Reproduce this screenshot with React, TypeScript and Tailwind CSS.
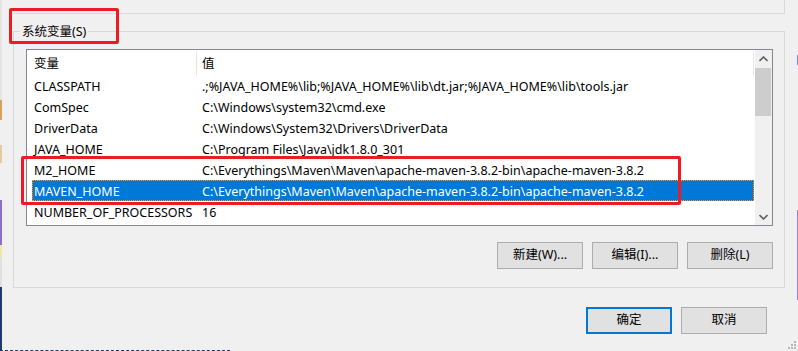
import React from 'react'

const font = { fontFamily: '"Noto Sans", "Noto Sans CJK SC", sans-serif' }

const rows = [
    { name: 'CLASSPATH', value: '.;%JAVA_HOME%\\lib;%JAVA_HOME%\\lib\\dt.jar;%JAVA_HOME%\\lib\\tools.jar' },
    { name: 'ComSpec', value: 'C:\\Windows\\system32\\cmd.exe' },
    { name: 'DriverData', value: 'C:\\Windows\\System32\\Drivers\\DriverData' },
    { name: 'JAVA_HOME', value: 'C:\\Program Files\\Java\\jdk1.8.0_301' },
    { name: 'M2_HOME', value: 'C:\\Everythings\\Maven\\Maven\\apache-maven-3.8.2-bin\\apache-maven-3.8.2' },
    { name: 'MAVEN_HOME', value: 'C:\\Everythings\\Maven\\Maven\\apache-maven-3.8.2-bin\\apache-maven-3.8.2', selected: true },
    { name: 'NUMBER_OF_PROCESSORS', value: '16' },
]

function WinButton({ label, primary }: { label: string; primary?: boolean }) {
    return (
        <button
            type="button"
            className={
                primary
                    ? 'w-[86px] h-[27px] bg-[#e1e1e1] border-2 border-[#0078d7] text-[12.5px] text-black flex items-center justify-center'
                    : 'w-[86px] h-[27px] bg-[#e1e1e1] border border-[#adadad] text-[12.5px] text-black flex items-center justify-center'
            }
        >
            {label}
        </button>
    )
}

function Chevron({ up }: { up?: boolean }) {
    return (
        <svg width="9" height="6" viewBox="0 0 9 6">
            <path
                d={up ? 'M0.5 5 L4.5 1 L8.5 5' : 'M0.5 1 L4.5 5 L8.5 1'}
                fill="none"
                stroke="#606060"
                strokeWidth="1.6"
            />
        </svg>
    )
}

export default function App() {
    return (
        <div className="w-[798px] h-[351px] bg-[#f0f0f0] flex flex-col overflow-hidden text-black" style={font}>
            <div className="flex h-[350px]">
                {/* 左侧其他窗口的边缘 */}
                <div className="w-[2px] flex flex-col">
                    <div className="h-[100px] bg-[#e4e4e4]" />
                    <div className="h-[20px] bg-[#d9a05b]" />
                    <div className="h-[25px] bg-[#f0f0f0]" />
                    <div className="h-[18px] bg-[#e8c9a0]" />
                    <div className="h-[37px] bg-[#f0f0f0]" />
                    <div className="h-[45px] bg-[#8a6fc9]" />
                    <div className="h-[12px] bg-[#f2e6a8]" />
                    <div className="h-[30px] bg-[#e0e0e0]" />
                    <div className="flex-1 bg-[#1c3a6b]" />
                </div>

                <div className="w-[795px] flex flex-col relative">
                    {/* 上一个分组框 */}
                    <div className="ml-[11px] w-[772px] h-[14px] border-b border-r border-[#d9d9d9]" />

                    {/* 系统变量 */}
                    <div className="mt-[17px] ml-[11px] w-[772px] h-[257px] border border-[#d9d9d9] relative flex flex-col">
                        <div className="absolute left-[6px] -top-[9px] px-[2px] bg-[#f0f0f0] text-[12.5px] leading-[18px]">
                            系统变量(S)
                        </div>

                        <div className="mt-[17px] ml-[12px] w-[747px] h-[177px] border border-[#828790] bg-white flex">
                            <div className="w-[728px] flex flex-col">
                                <div className="h-[25px] flex text-[12.5px]">
                                    <div className="w-[169px] pl-[7px] pt-[3px] flex items-center">变量</div>
                                    <div className="w-px mt-px h-[24px] bg-[#e5e5e5]" />
                                    <div className="flex-1 pl-[5px] pt-[3px] flex items-center">值</div>
                                    <div className="w-px mt-px h-[24px] bg-[#e5e5e5]" />
                                    <div className="w-px" />
                                </div>
                                {rows.map(row => (
                                    <div
                                        key={row.name}
                                        className={
                                            row.selected
                                                ? 'ml-[5px] mr-px h-[21px] flex items-center text-[12.5px] pt-[3px] bg-[#0078d7] text-white border border-dotted border-[#e8994a]'
                                                : 'ml-[5px] mr-px h-[21px] flex items-center text-[12.5px] pt-[3px] border border-transparent'
                                        }
                                    >
                                        <div className="w-[163px] pl-[1px] whitespace-nowrap">{row.name}</div>
                                        <div className="flex-1 pl-[6px] whitespace-nowrap">{row.value}</div>
                                    </div>
                                ))}
                            </div>
                            <div className="w-[17px] flex flex-col bg-[#f0f0f0]">
                                <div className="h-[17px] flex items-center justify-center">
                                    <Chevron up />
                                </div>
                                <div className="mt-px ml-0 w-[16px] h-[48px] bg-[#cdcdcd]" />
                                <div className="flex-1" />
                                <div className="h-[17px] flex items-center justify-center">
                                    <Chevron />
                                </div>
                            </div>
                        </div>

                        <div className="mt-[16px] mr-[11px] flex justify-end gap-[9px]">
                            <WinButton label="新建(W)..." />
                            <WinButton label="编辑(I)..." />
                            <WinButton label="删除(L)" />
                        </div>
                    </div>

                    <div className="mt-[19px] mr-[30px] flex justify-end gap-[9px]">
                        <WinButton label="确定" primary />
                        <WinButton label="取消" />
                    </div>

                    {/* 红框标注 */}
                    <div className="absolute left-[7px] top-[8px] w-[110px] h-[36px] border-[3px] border-[#ed1c24] rounded-[2px]" />
                    <div className="absolute left-[19px] top-[156px] w-[660px] h-[49px] border-[3px] border-[#ed1c24] rounded-[2px]" />

                    {/* 窗口缩放角 */}
                    <svg className="absolute right-0 bottom-0" width="10" height="10" viewBox="0 0 10 10">
                        <rect x="7" y="1" width="2" height="2" fill="#b8b8b8" />
                        <rect x="4" y="4" width="2" height="2" fill="#b8b8b8" />
                        <rect x="7" y="4" width="2" height="2" fill="#b8b8b8" />
                        <rect x="1" y="7" width="2" height="2" fill="#b8b8b8" />
                        <rect x="4" y="7" width="2" height="2" fill="#b8b8b8" />
                        <rect x="7" y="7" width="2" height="2" fill="#b8b8b8" />
                    </svg>
                </div>

                <div className="w-px flex flex-col">
                    <div className="h-[55px]" />
                    <div className="h-[10px] bg-[#6a8fd0]" />
                    <div className="h-[145px]" />
                    <div className="h-[90px] bg-[#9a7fe0]" />
                </div>
            </div>
            <div className="h-px w-[230px] border-t border-dashed border-[#1c3a6b]" />
        </div>
    )
}
